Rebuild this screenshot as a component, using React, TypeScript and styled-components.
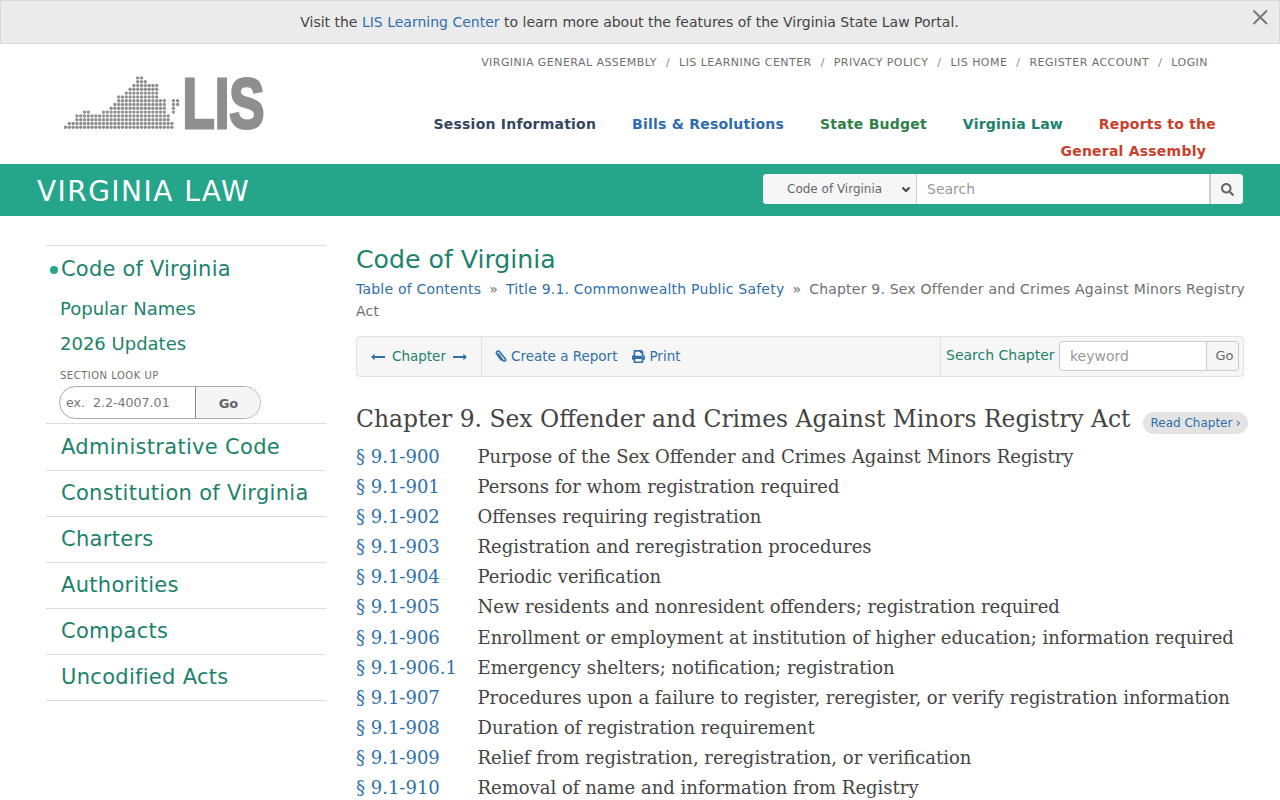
import React from "react";
import styled, { createGlobalStyle } from "styled-components";
import { FaPrint, FaSearch } from "react-icons/fa";

const GlobalStyle = createGlobalStyle`
  html, body { margin: 0; padding: 0; background: #fff; }
  body {
    font-family: "DejaVu Sans", sans-serif;
    font-size: 14px;
    color: #444;
  }
  a { text-decoration: none; color: #2f70ab; }
  * { box-sizing: border-box; }
`;

const Page = styled.div`
  width: 1280px;
  height: 800px;
  overflow: hidden;
`;

const Notice = styled.div`
  position: relative;
  height: 44px;
  background: #ebebeb;
  border: 1px solid #d8d8d8;
  display: flex;
  align-items: center;
  justify-content: center;
  font-size: 14px;
  color: #444;
  padding-right: 21px;
`;

const Close = styled.span`
  position: absolute;
  right: 9px;
  top: 6px;
  width: 20px;
  height: 20px;
  svg { display: block; }
`;

const Header = styled.header`
  height: 120px;
  display: flex;
  padding-left: 64px;
`;

const Logo = styled.div`
  width: 202px;
  padding-top: 31px;
  svg { display: block; }
`;

const HeaderRight = styled.div`
  flex: 1;
  display: flex;
  flex-direction: column;
`;

const TopLinks = styled.div`
  flex: none;
  display: flex;
  justify-content: flex-end;
  padding: 12px 72px 0 0;
  height: 67px;
  font-size: 11px;
  letter-spacing: 0.45px;
  line-height: 14px;
  color: #777;
  a { color: #6f6f6f; }
  i { font-style: normal; margin: 0 9px; color: #888; }
`;

const MainNav = styled.nav`
  flex: none;
  display: flex;
  justify-content: flex-end;
  padding-right: 64px;
  font-size: 14px;
  font-weight: 700;
  line-height: 27px;
  letter-spacing: 0.22px;
`;

const NavLink = styled.a<{ $color: string }>`
  color: ${(p) => p.$color};
  margin-left: 36px;
  white-space: nowrap;
`;

const NavWrap = styled.a`
  color: #c9402b;
  margin-left: -3px;
  width: 156px;
  white-space: nowrap;
  text-align: right;
  span { display: block; }
  span:last-child { margin-right: 10px; }
`;

const Band = styled.div`
  height: 52px;
  background: #25a68a;
  display: flex;
  align-items: center;
  justify-content: space-between;
  padding: 0 37px 2px 37px;
`;

const BandTitle = styled.div`
  color: #fff;
  font-size: 28px;
  letter-spacing: 1.45px;
  line-height: 52px;
  padding-top: 6px;
`;

const SearchGroup = styled.div`
  display: flex;
  width: 480px;
  height: 30px;
  border-radius: 4px;
  overflow: hidden;
  background: #fff;
`;

const SelectBox = styled.div`
  width: 154px;
  background: #f6f6f6;
  font-size: 12px;
  color: #666;
  display: flex;
  align-items: center;
  padding-left: 24px;
  position: relative;
  border-right: 1px solid #ccc;
  svg { position: absolute; right: 5px; top: 12px; }
`;

const SearchInput = styled.div`
  flex: 1;
  font-size: 14px;
  color: #999;
  display: flex;
  align-items: center;
  padding-left: 10px;
`;

const SearchBtn = styled.div`
  width: 34px;
  background: #f6f6f6;
  border-left: 2px solid #ccc;
  color: #666;
  display: flex;
  align-items: center;
  justify-content: center;
  font-size: 13px;
`;

const Body = styled.div`
  display: flex;
  padding: 29px 0 0 46px;
`;

const Side = styled.aside`
  width: 280px;
  flex: none;
  border-bottom: 1px solid #dcdcdc;
  align-self: flex-start;
`;

const SideItem = styled.a<{ $tall?: boolean }>`
  display: block;
  border-top: 1px solid #dcdcdc;
  color: #1d826b;
  font-size: 21px;
  line-height: ${(p) => (p.$tall ? "47px" : "45px")};
  height: ${(p) => (p.$tall ? "47px" : "46px")};
  padding-left: 15px;
  letter-spacing: 0.3px;
`;

const CodeBlock = styled.div`
  border-top: 1px solid #dcdcdc;
  height: 178px;
  padding-left: 14px;
  position: relative;
`;

const CodeTitle = styled.a`
  display: block;
  color: #1d826b;
  font-size: 21px;
  line-height: 26px;
  padding: 10px 0 0 1px;
  height: 45px;
  letter-spacing: 0.2px;
  &::before {
    content: "";
    position: absolute;
    left: 4px;
    top: 20px;
    width: 8px;
    height: 8px;
    border-radius: 50%;
    background: #25a68a;
  }
`;

const SubItem = styled.a`
  display: block;
  color: #1d826b;
  font-size: 18px;
  line-height: 35px;
`;

const LookLabel = styled.div`
  font-size: 10px;
  color: #6f6f6f;
  line-height: 14px;
  margin-top: 8px;
  letter-spacing: 0.5px;
`;

const LookGroup = styled.div`
  display: flex;
  width: 202px;
  height: 33px;
  margin: 3px 0 0 -1px;
  border: 1px solid #aaa;
  border-radius: 17px;
  overflow: hidden;
`;

const LookInput = styled.div`
  width: 136px;
  color: #777;
  padding-left: 6px;
  line-height: 31px;
  border-right: 1px solid #888;
  white-space: pre;
  font-size: 12.6px;
`;

const LookGo = styled.div`
  flex: 1;
  background: #f5f5f5;
  color: #666;
  font-weight: 700;
  text-align: center;
  line-height: 33px;
  font-size: 13px;
  padding-left: 1px;
`;

const Main = styled.main`
  width: 888px;
  margin-left: 30px;
`;

const PageTitle = styled.h1`
  margin: 0;
  font-weight: 400;
  font-size: 25.2px;
  line-height: 30px;
  color: #1d826b;
`;

const Crumbs = styled.div`
  margin: 3px -4px 0 0;
  font-size: 14px;
  line-height: 22px;
  letter-spacing: 0.21px;
  color: #6f6f6f;
  i { font-style: normal; margin: 0 8px; }
`;

const Toolbar = styled.div`
  margin-top: 14px;
  height: 41px;
  display: flex;
  background: #f6f6f6;
  border: 1px solid #e0e0e0;
  border-radius: 4px;
  font-size: 13.5px;
`;

const ToolCell = styled.div`
  display: flex;
  align-items: center;
  height: 100%;
  padding: 0 14px;
  gap: 7px;
  color: #1d826b;
  border-right: 1px solid #e0e0e0;
  a { display: flex; align-items: center; }
  span { margin-top: -1px; }
`;

const ToolLinks = styled.div`
  flex: 1;
  display: flex;
  align-items: center;
  gap: 15px;
  padding-left: 13px;
  a { display: flex; align-items: center; gap: 4px; margin-top: -1px; }
`;

const ChapterSearch = styled.div`
  display: flex;
  align-items: center;
  width: 303px;
  height: 100%;
  padding-left: 5px;
  border-left: 1px solid #e0e0e0;
  color: #1d826b;
  font-size: 14px;
  span { margin-top: -3px; white-space: nowrap; width: 108px; }
`;

const KeywordField = styled.div`
  width: 148px;
  height: 30px;
  margin: -1px 0 0 5px;
  background: #fff;
  border: 1px solid #ccc;
  border-radius: 4px 0 0 4px;
  color: #999;
  line-height: 28px;
  padding-left: 10px;
`;

const KeywordGo = styled.div`
  width: 32px;
  height: 30px;
  margin-top: -1px;
  background: #f6f6f6;
  border: 1px solid #ccc;
  border-left: none;
  border-radius: 0 4px 4px 0;
  color: #666;
  font-size: 13px;
  text-align: center;
  line-height: 28px;
  padding-left: 4px;
`;

const ChapterHead = styled.div`
  display: flex;
  align-items: center;
  margin-top: 26px;
  height: 32px;
`;

const ChapterTitle = styled.h2`
  margin: 0;
  font-family: "DejaVu Serif", serif;
  font-weight: 400;
  font-size: 23.4px;
  color: #444;
  white-space: nowrap;
`;

const ReadPill = styled.a`
  margin-left: 13px;
  height: 22px;
  padding: 0 7px;
  border-radius: 11px;
  background: #e4e4e4;
  font-size: 12px;
  line-height: 22px;
  white-space: nowrap;
  position: relative;
  top: 4px;
  span { margin-left: 3px; font-size: 13px; }
`;

const Sections = styled.div`
  margin-top: 7px;
  font-family: "DejaVu Serif", serif;
  font-size: 18px;
`;

const SectionRow = styled.div`
  display: flex;
  height: 30.1px;
  line-height: 30px;
  color: #444;
  white-space: nowrap;
  a { width: 121.5px; flex: none; }
`;

const rows: [string, string][] = [
  ["9.1-900", "Purpose of the Sex Offender and Crimes Against Minors Registry"],
  ["9.1-901", "Persons for whom registration required"],
  ["9.1-902", "Offenses requiring registration"],
  ["9.1-903", "Registration and reregistration procedures"],
  ["9.1-904", "Periodic verification"],
  ["9.1-905", "New residents and nonresident offenders; registration required"],
  ["9.1-906", "Enrollment or employment at institution of higher education; information required"],
  ["9.1-906.1", "Emergency shelters; notification; registration"],
  ["9.1-907", "Procedures upon a failure to register, reregister, or verify registration information"],
  ["9.1-908", "Duration of registration requirement"],
  ["9.1-909", "Relief from registration, reregistration, or verification"],
  ["9.1-910", "Removal of name and information from Registry"],
];

// dot rows of the state map, bottom up: [first column, last column]
const dotRows: [number, number][][] = [
  [[0, 28]],
  [[1, 28]],
  [[3, 27]],
  [[3, 27]],
  [[5, 6], [10, 26]],
  [[12, 26]],
  [[13, 26]],
  [[14, 26]],
  [[14, 24]],
  [[16, 24]],
  [[17, 24]],
  [[18, 24]],
  [[19, 21]],
  [[19, 20]],
];

// the few dots off the coast: [column, row]
const shoreDots: [number, number][] = [
  [28.4, 4], [28.4, 5], [28.4, 6], [29.5, 6], [28.4, 7], [29.5, 7],
];

function LisLogo() {
  const dots: React.ReactNode[] = [];
  const dot = (c: number, r: number) => (
    <circle key={`${r}-${c}`} cx={1.5 + c * 3.8} cy={52.3 - r * 3.8} r={1.7} fill="#8f8f8f" />
  );
  dotRows.forEach((spans, r) =>
    spans.forEach(([a, b]) => {
      for (let c = a; c <= b; c++) dots.push(dot(c, r));
    })
  );
  shoreDots.forEach(([c, r]) => dots.push(dot(c, r)));
  return (
    <svg width="202" height="60" viewBox="0 0 202 60">
      {dots}
      <text
        x="118.5"
        y="52.8"
        fontFamily="Liberation Sans"
        fontWeight="700"
        fontSize="71"
        fill="#8f8f8f"
        stroke="#8f8f8f"
        strokeWidth="3"
        textLength="82"
        lengthAdjust="spacingAndGlyphs"
      >
        LIS
      </text>
    </svg>
  );
}

function ArrowLeft() {
  return (
    <svg width="14" height="8" viewBox="0 0 14 8" fill="#2f70ab">
      <path d="M0 4 L3.6 0.8 V3 H14 V5 H3.6 V7.2 Z" />
    </svg>
  );
}

function ArrowRight() {
  return (
    <svg width="14" height="8" viewBox="0 0 14 8" fill="#2f70ab">
      <path d="M14 4 L10.4 0.8 V3 H0 V5 H10.4 V7.2 Z" />
    </svg>
  );
}

function ClipIcon() {
  return (
    <svg width="12" height="13" viewBox="0 0 12 13" fill="none" stroke="#2f70ab" strokeWidth="1.6">
      <path d="M3.2 3.6 L8.2 10.6 C9.2 12 11.4 10.6 10.4 9 L4.6 1.8 C3.4 0.3 0.6 1.8 1.6 3.8 L6.6 10.6" />
    </svg>
  );
}

export default function App() {
  return (
    <Page>
      <GlobalStyle />
      <Notice>
        <span>Visit the <a href="#">LIS Learning Center</a> to learn more about the features of the Virginia State Law Portal.</span>
        <Close>
          <svg width="20" height="20" viewBox="0 0 20 20" fill="none" stroke="#777" strokeWidth="2">
            <path d="M3.5 3.5 L17 17 M17 3.5 L3.5 17" />
          </svg>
        </Close>
      </Notice>
      <Header>
        <Logo><LisLogo /></Logo>
        <HeaderRight>
          <TopLinks>
            <a href="#">VIRGINIA GENERAL ASSEMBLY</a><i>/</i>
            <a href="#">LIS LEARNING CENTER</a><i>/</i>
            <a href="#">PRIVACY POLICY</a><i>/</i>
            <a href="#">LIS HOME</a><i>/</i>
            <a href="#">REGISTER ACCOUNT</a><i>/</i>
            <a href="#">LOGIN</a>
          </TopLinks>
          <MainNav>
            <NavLink $color="#34465f" href="#">Session Information</NavLink>
            <NavLink $color="#2f6cab" href="#">Bills &amp; Resolutions</NavLink>
            <NavLink $color="#2f8148" href="#">State Budget</NavLink>
            <NavLink $color="#1d826b" href="#">Virginia Law</NavLink>
            <NavWrap href="#"><span>Reports to the</span><span>General Assembly</span></NavWrap>
          </MainNav>
        </HeaderRight>
      </Header>
      <Band>
        <BandTitle>VIRGINIA LAW</BandTitle>
        <SearchGroup>
          <SelectBox>
            Code of Virginia
            <svg width="10" height="7" viewBox="0 0 10 7" fill="none" stroke="#444" strokeWidth="2"><path d="M1.5 1.5 L5 5 L8.5 1.5" /></svg>
          </SelectBox>
          <SearchInput>Search</SearchInput>
          <SearchBtn><FaSearch /></SearchBtn>
        </SearchGroup>
      </Band>
      <Body>
        <Side>
          <CodeBlock>
            <CodeTitle href="#">Code of Virginia</CodeTitle>
            <SubItem href="#">Popular Names</SubItem>
            <SubItem href="#">2026 Updates</SubItem>
            <LookLabel>SECTION LOOK UP</LookLabel>
            <LookGroup>
              <LookInput>ex.  2.2-4007.01</LookInput>
              <LookGo>Go</LookGo>
            </LookGroup>
          </CodeBlock>
          <SideItem $tall href="#">Administrative Code</SideItem>
          <SideItem href="#">Constitution of Virginia</SideItem>
          <SideItem href="#">Charters</SideItem>
          <SideItem href="#">Authorities</SideItem>
          <SideItem href="#">Compacts</SideItem>
          <SideItem href="#">Uncodified Acts</SideItem>
        </Side>
        <Main>
          <PageTitle>Code of Virginia</PageTitle>
          <Crumbs>
            <a href="#">Table of Contents</a><i>»</i>
            <a href="#">Title 9.1. Commonwealth Public Safety</a><i>»</i>
            <span>Chapter 9. Sex Offender and Crimes Against Minors Registry Act</span>
          </Crumbs>
          <Toolbar>
            <ToolCell>
              <a href="#"><ArrowLeft /></a>
              <span>Chapter</span>
              <a href="#"><ArrowRight /></a>
            </ToolCell>
            <ToolLinks>
              <a href="#"><ClipIcon />Create a Report</a>
              <a href="#"><FaPrint size={13} />Print</a>
            </ToolLinks>
            <ChapterSearch>
              <span>Search Chapter</span>
              <KeywordField>keyword</KeywordField>
              <KeywordGo>Go</KeywordGo>
            </ChapterSearch>
          </Toolbar>
          <ChapterHead>
            <ChapterTitle>Chapter 9. Sex Offender and Crimes Against Minors Registry Act</ChapterTitle>
            <ReadPill href="#">Read Chapter<span>›</span></ReadPill>
          </ChapterHead>
          <Sections>
            {rows.map(([num, title]) => (
              <SectionRow key={num}>
                <a href="#">§ {num}</a>
                <span>{title}</span>
              </SectionRow>
            ))}
          </Sections>
        </Main>
      </Body>
    </Page>
  );
}
